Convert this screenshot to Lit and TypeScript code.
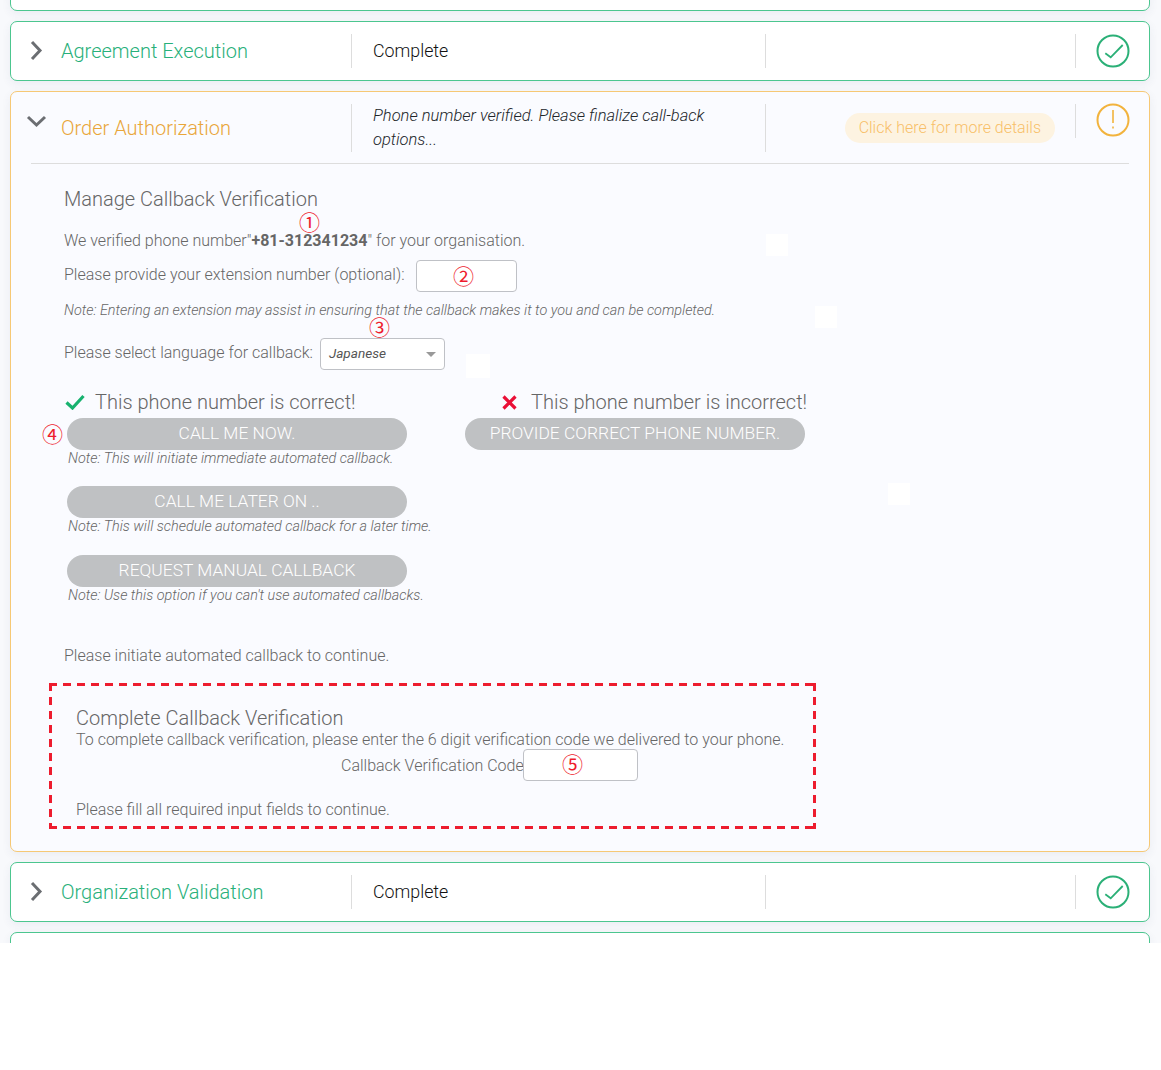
import { LitElement, html, css, svg } from "lit";
import { customElement } from "lit/decorators.js";

const okIcon = html`<svg class="status" viewBox="0 0 34 34" fill="none"><circle cx="17" cy="17" r="15.5" stroke="#2bb077" stroke-width="2"/><path d="M9.3 20.3 14.7 24.3 26.7 12" transform="translate(0 -1)" stroke="#2bb077" stroke-width="1.8"/></svg>`;
const warnIcon = html`<svg class="status" viewBox="0 0 34 34" fill="none"><circle cx="17" cy="17" r="15.5" stroke="#f2b33d" stroke-width="2"/><path d="M17 7V20M17 23.5V25.5" stroke="#f2b33d" stroke-width="1.6"/></svg>`;
const chevRight = svg`<path d="M3 3 11 11.5 3 20" stroke="#6b6e72" stroke-width="3" fill="none"/>`;
const chevDown = svg`<path d="M2 2 10.5 10 19 2" stroke="#6b6e72" stroke-width="3" fill="none"/>`;

@customElement("app-root")
export class AppRoot extends LitElement {
  static styles = css`
    :host { display: block; font-family: Roboto, "Liberation Sans", sans-serif; font-weight: 300; color: #666; }
    .page { position: relative; height: 943px; overflow: hidden; background: #f8f9fc; padding: 0 11px 0 10px; box-sizing: border-box; display: flex; flex-direction: column; gap: 10px; }
    .card { flex: none; box-sizing: border-box; border: 1px solid #4cc68f; border-radius: 7px; background: #fff; box-shadow: 0 3px 10px rgba(60, 70, 110, .07); }
    .first { margin-top: -49px; }
    .head { display: grid; grid-template-columns: 341px 414px 310px 1fr; height: 58px; align-items: center; }
    .head > div { height: 34px; display: flex; align-items: center; box-sizing: border-box; }
    .titlecol { border-right: 1px solid #ddd; position: relative; padding-left: 50px; font-size: 20px; color: #28b07a; }
    .chev { position: absolute; left: 18px; top: 5px; width: 16px; height: 24px; }
    .statecol { border-right: 1px solid #ddd; padding: 0 0 2px 21px; font-size: 17.8px; font-weight: 300; color: #111; }
    .blank { border-right: 1px solid #ddd; }
    .iconcol { justify-content: center; }
    .status { width: 34px; height: 34px; display: block; }
    .open { border-color: #f6c875; background: #fafbff; height: 761px; }
    .ohead { display: flex; align-items: flex-start; padding: 12px 0 0 0; height: 59px; margin: 0 20px; border-bottom: 1px solid #ddd; position: relative; }
    .ohead .o1 { width: 290px; height: 48px; border-right: 1px solid #ddd; margin-left: -20px; padding-left: 50px; display: flex; align-items: center; font-size: 20px; color: #e9a63a; position: relative; }
    .ohead .chev2 { position: absolute; left: 15px; top: 11px; width: 21px; height: 14px; }
    .ohead .o2 { width: 372px; height: 48px; border-right: 1px solid #ddd; padding: 0 20px 0 21px; font-size: 16.5px; line-height: 24px; font-style: italic; color: #212529; }
    .ohead .o3 { width: 310px; height: 34px; border-right: 1px solid #ddd; display: flex; justify-content: flex-end; align-items: flex-start; padding-right: 20px; box-sizing: border-box; }
    .pill { margin-top: 9px; height: 30px; line-height: 30px; padding: 0 14px; border-radius: 15px; background: #fdf3e1; color: #f8bf68; font-size: 16px; white-space: nowrap; }
    .ohead .o4 { flex: 1; display: flex; justify-content: center; margin: -1px -20px 0 0; }
    .body { padding: 0 0 0 53px; font-size: 16px; line-height: 20px; }
    h3 { margin: 0; font-weight: 300; font-size: 20px; line-height: 24px; color: #666; }
    .h1 { margin-top: 23px; }
    b { font-weight: 700; }
    .l1 { margin-top: 20px; }
    .line { display: flex; align-items: center; }
    .lbl { margin-bottom: 2px; }
    .l2 { margin-top: 9px; height: 32px; gap: 11px; }
    .field { background: #fff; border: 1px solid #bfc1c6; border-radius: 4px; box-sizing: border-box; height: 32px; }
    .f2 { width: 101px; }
    .note { font-style: italic; font-size: 14.4px; line-height: 20px; white-space: nowrap; }
    .n1 { margin-top: 9px; }
    .l3 { margin-top: 17px; height: 32px; gap: 7px; }
    .select { width: 125px; display: flex; align-items: center; justify-content: space-between; padding: 0 8px 2px; font-size: 13.6px; font-style: italic; font-weight: 400; color: #555; }
    .arrow { width: 0; height: 0; margin-top: 2px; border: 5.5px solid transparent; border-top: 5px solid #999; border-bottom: 0; }
    .cols { display: grid; grid-template-columns: 401px 400px; margin-top: 20px; }
    .okline { height: 24px; display: flex; align-items: center; font-size: 20px; line-height: 24px; white-space: nowrap; }
    .okline svg { flex: none; }
    .okl { gap: 10px; padding-left: 1px; }
    .badl { gap: 14px; padding-left: 37px; }
    .btn { height: 32px; line-height: 30px; border-radius: 16px; background: #bfc1c3; color: #fff; text-align: center; font-size: 17.4px; font-weight: 300; margin-top: 4px; width: 340px; white-space: nowrap; }
    .leftcol { display: flex; flex-direction: column; }
    .leftcol .btn { margin-left: 3px; }
    .leftcol .note { margin-left: 4px; margin-top: -1px; }
    .leftcol .gap { margin-top: 17px; }
    .leftcol .gap2 { margin-top: 18px; }
    .init { margin-top: 40px; }
    .box {
      position: relative; margin: 17px 0 0 -15px; width: 767px; height: 146px; box-sizing: border-box; padding: 23px 0 0 27px;
      background:
        repeating-linear-gradient(90deg, #ed1c2e 0 8px, transparent 8px 14px) 0 0 / 100% 3px no-repeat,
        repeating-linear-gradient(90deg, #ed1c2e 0 8px, transparent 8px 14px) 0 100% / 100% 3px no-repeat,
        repeating-linear-gradient(180deg, #ed1c2e 0 8px, transparent 8px 14px) 0 0 / 3px 100% no-repeat,
        repeating-linear-gradient(180deg, #ed1c2e 0 8px, transparent 8px 14px) 100% 0 / 3px 100% no-repeat;
    }
    .cb { margin: 0 0 0 265px; height: 32px; display: flex; align-items: center; }
    .f5 { width: 115px; margin: 0 0 2px -1px; }
    .fill { margin-top: 18px; }
    .mk { position: absolute; font-family: "Noto Sans CJK JP", sans-serif; font-weight: 400; font-size: 21px; line-height: 24px; color: #ee1c2e; }
    .wh { position: absolute; background: #fff; }
  `;

  collapsed(title: string, extra = "") {
    return html`<div class="card ${extra}"><div class="head">
      <div class="titlecol"><svg class="chev" viewBox="0 0 16 24">${chevRight}</svg>${title}</div>
      <div class="statecol">Complete</div><div class="blank"></div>
      <div class="iconcol">${okIcon}</div>
    </div></div>`;
  }

  render() {
    return html`<div class="page">
      ${this.collapsed("Agreement Execution", "first")}
      ${this.collapsed("Agreement Execution")}
      <div class="card open">
        <div class="ohead">
          <div class="o1"><svg class="chev2" viewBox="0 0 21 14">${chevDown}</svg>Order Authorization</div>
          <div class="o2">Phone number verified. Please finalize call-back options...</div>
          <div class="o3"><span class="pill">Click here for more details</span></div>
          <div class="o4">${warnIcon}</div>
        </div>
        <div class="body">
          <h3 class="h1">Manage Callback Verification</h3>
          <div class="l1">We verified phone number"<b>+81-312341234</b>" for your organisation.</div>
          <div class="line l2"><span class="lbl">Please provide your extension number (optional):</span><div class="field f2"></div></div>
          <div class="note n1">Note: Entering an extension may assist in ensuring that the callback makes it to you and can be completed.</div>
          <div class="line l3"><span class="lbl">Please select language for callback:</span><div class="field select">Japanese<span class="arrow"></span></div></div>
          <div class="cols">
            <div class="leftcol">
              <div class="okline okl"><svg width="20" height="16" viewBox="0 0 20 16" fill="none"><path d="M1.5 8.5 7.5 14 18.5 2" stroke="#17b26f" stroke-width="3.2"/></svg>This phone number is correct!</div>
              <div class="btn">CALL ME NOW.</div>
              <div class="note">Note: This will initiate immediate automated callback.</div>
              <div class="btn gap">CALL ME LATER ON ..</div>
              <div class="note">Note: This will schedule automated callback for a later time.</div>
              <div class="btn gap2">REQUEST MANUAL CALLBACK</div>
              <div class="note">Note: Use this option if you can't use automated callbacks.</div>
            </div>
            <div>
              <div class="okline badl"><svg width="15" height="15" viewBox="0 0 15 15" fill="none"><path d="M1.5 1.5 13.5 13.5M13.5 1.5 1.5 13.5" stroke="#ea0f36" stroke-width="3.2"/></svg>This phone number is incorrect!</div>
              <div class="btn">PROVIDE CORRECT PHONE NUMBER.</div>
            </div>
          </div>
          <div class="init">Please initiate automated callback to continue.</div>
          <div class="box">
            <h3>Complete Callback Verification</h3>
            <div>To complete callback verification, please enter the 6 digit verification code we delivered to your phone.</div>
            <div class="cb">Callback Verification Code<div class="field f5"></div></div>
            <div class="fill">Please fill all required input fields to continue.</div>
          </div>
        </div>
      </div>
      ${this.collapsed("Organization Validation")}
      ${this.collapsed("")}
      <div class="wh" style="left:766px;top:234px;width:22px;height:22px"></div>
      <div class="wh" style="left:815px;top:306px;width:22px;height:22px"></div>
      <div class="wh" style="left:466px;top:354px;width:24px;height:24px"></div>
      <div class="wh" style="left:888px;top:483px;width:22px;height:22px"></div>
      <span class="mk" style="left:299px;top:209px">①</span>
      <span class="mk" style="left:453px;top:263px">②</span>
      <span class="mk" style="left:369px;top:314px">③</span>
      <span class="mk" style="left:42px;top:421px">④</span>
      <span class="mk" style="left:562px;top:751px">⑤</span>
    </div>`;
  }
}
